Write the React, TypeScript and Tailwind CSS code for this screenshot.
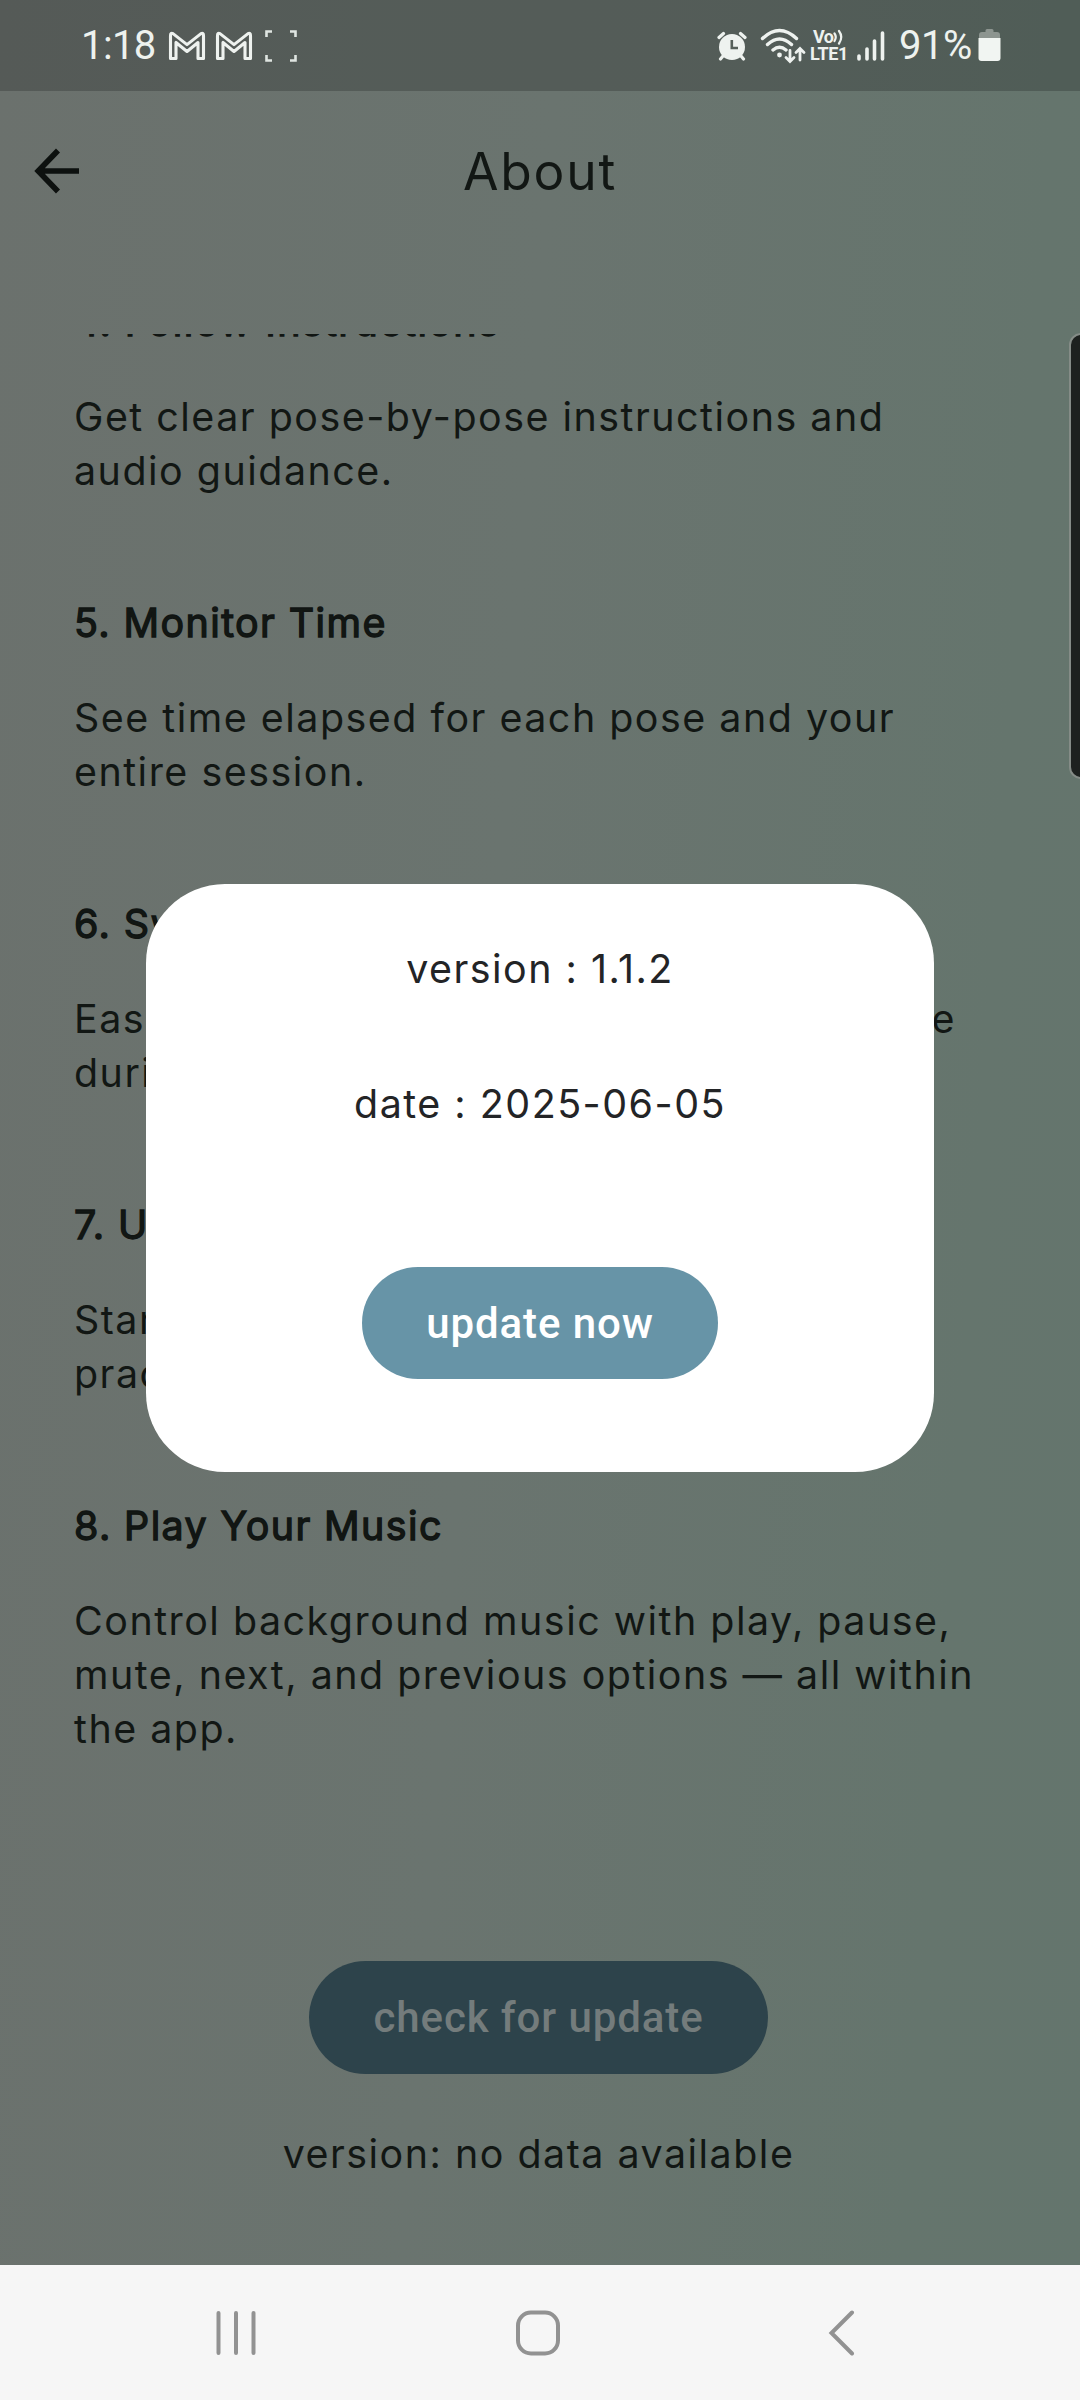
import React from "react";

type Section = { title: string; lines: string[]; spread?: boolean };

const sections: Section[] = [
  { title: "4. Follow Instructions", lines: ["Get clear pose-by-pose instructions and", "audio guidance."] },
  { title: "5. Monitor Time", lines: ["See time elapsed for each pose and your", "entire session."] },
  { title: "6. Switch Poses", lines: ["Easily move to the next or previous pose", "during your session."], spread: true },
  { title: "7. Use Anytime", lines: ["Start a session whenever you want and", "practice anywhere."] },
  {
    title: "8. Play Your Music",
    lines: ["Control background music with play, pause,", "mute, next, and previous options — all within", "the app."],
  },
];

function Gmail() {
  return (
    <svg className="h-[30px] w-[38px]" viewBox="0 0 38 30" fill="none" stroke="#eef2ef" strokeWidth="3.1" strokeLinejoin="round">
      <path d="M2.500 4.500Q2.500 1.400 5 2.600L19 13.600 33 2.600Q35.500 1.400 35.500 4.500V27.500H30V11.500L19 20.500 8 11.500V27.500H2.500Z" />
    </svg>
  );
}

function StatusBar() {
  return (
    <header className="flex h-[91px] items-center bg-black/20 pl-[81px] pr-[79px] text-[#eef2ef]">
      <span className="font-[Roboto] text-[40px] leading-[91px] tracking-[-0.6px]">1:18</span>
      <div className="ml-[12px] flex items-center gap-[9px]">
        <Gmail />
        <Gmail />
        <svg className="ml-[3px] h-[32px] w-[32px]" viewBox="0 0 32 32" fill="none" stroke="#dfe5e1" strokeWidth="2.6">
          <path d="M1.500 7V1.500H7M25 1.500H30.500V7M30.500 25V30.500H25M7 30.500H1.500V25" />
        </svg>
      </div>
      <div className="ml-auto flex items-center">
        <svg className="h-[30px] w-[30px]" viewBox="0 0 30 30">
          <g stroke="#eef2ef" strokeWidth="3.200" strokeLinecap="round">
            <path d="M2 6.500 6.500 2.500M28 6.500 23.500 2.500M6 25 3.500 28M24 25 26.500 28" />
          </g>
          <circle cx="15" cy="16" r="13" fill="#eef2ef" />
          <path d="M14.800 9V17H21" fill="none" stroke="#56605a" strokeWidth="2.600" />
        </svg>
        <svg className="ml-[13px] h-[36px] w-[46px]" viewBox="0 0 46 36" fill="none" stroke="#eef2ef" strokeWidth="3.400" strokeLinecap="round">
          <path d="M2.500 10.500Q19.500-5.500 36.500 10.500M7.500 16.500Q19.500 5.500 31.500 16.500M13 22Q19.500 16.500 26 22" />
          <circle cx="19.500" cy="27" r="2.400" fill="#eef2ef" stroke="none" />
          <path d="M30 22.500V33M26 29.500 30 33.500 34 29.500M40 32V21M36 24.500 40 20.500 44 24.500" strokeWidth="2.800" />
        </svg>
        <div className="ml-[4px] flex w-[39px] flex-col font-[Roboto] font-bold">
          <span className="flex h-[17px] items-center pl-[3px] text-[18px] leading-[17px] tracking-[-0.5px]">
            Vo
            <svg className="h-[16px] w-[11px]" viewBox="0 0 11 16" fill="none" stroke="#eef2ef" strokeWidth="2.200" strokeLinecap="round">
              <path d="M1.500 4.500Q4 8 1.500 12M6 2Q10.500 8 6 14.500" />
            </svg>
          </span>
          <span className="text-[18px] leading-[18px] tracking-[-0.3px]">LTE1</span>
        </div>
        <svg className="ml-[8px] h-[30px] w-[28px]" viewBox="0 0 28 30" stroke="#eef2ef" strokeWidth="3.600" strokeLinecap="round">
          <path d="M2 25V28M10 18V28M17.500 10V28M25.500 2V28" />
        </svg>
        <span className="ml-[14px] font-[Roboto] text-[40px] leading-[91px] tracking-[-0.4px]">91%</span>
        <svg className="ml-[6px] h-[33px] w-[23px]" viewBox="0 0 23 33">
          <path d="M7.500 1.500Q7.500 0 9 0H14Q15.500 0 15.500 1.500V3H19Q22 3 22 6V12H1V6Q1 3 4 3H7.500Z" fill="#8d9590" />
          <path d="M.500 9H22.500V29Q22.500 32 19.500 32H3.500Q.500 32 .500 29Z" fill="#f1f5f2" />
        </svg>
      </div>
    </header>
  );
}

export default function App() {
  return (
    <div className="relative flex h-[2400px] w-[1080px] flex-col overflow-hidden bg-[linear-gradient(94deg,#6b716d_0%,#6a746f_45%,#65756d_85%,#64756d_100%)] font-[Inter,sans-serif] text-[#121714]">
      <StatusBar />

      <div className="relative flex h-[160px] items-center justify-center">
        <svg className="absolute left-[33px] top-[57px] h-[46px] w-[46px]" viewBox="0 0 46 46" fill="none" stroke="#0d110f" strokeWidth="5.600">
          <path d="M46 23H6M25 2.500 5.200 23 25 43.500" />
        </svg>
        <h1 className="text-[51.500px] leading-[60px] tracking-[1.800px]">About</h1>
      </div>

      <main className="mt-[83px] h-[1931px] overflow-hidden pl-[74px]">
        <div className="-mt-[39px]">
          {sections.map((s) => (
            <section key={s.title} className="mb-[97.700px] whitespace-nowrap">
              <h2 className="mb-[41px] text-[39.400px] leading-[54.300px] tracking-[1.400px] [-webkit-text-stroke:1.300px_#101412]">{s.title}</h2>
              {s.lines.map((l, i) => (
                <p
                  key={l}
                  className={
                    s.spread && i === 0
                      ? "w-[882px] text-[39.400px] leading-[54px] tracking-[1.500px] [text-align-last:justify]"
                      : "text-[39.400px] leading-[54px] tracking-[1.500px]"
                  }
                >
                  {l}
                </p>
              ))}
            </section>
          ))}
        </div>
        <div className="mr-[77px] flex flex-col items-center">
          <button className="mt-[107px] h-[113px] w-[459px] rounded-full bg-[#2d434b] font-[Roboto] text-[42px] font-medium tracking-[0.900px] text-[#747c7c]">
            check for update
          </button>
          <p className="mt-[53px] text-[39.400px] leading-[54px] tracking-[1.500px]">version: no data available</p>
        </div>
      </main>

      <nav className="relative h-[135px] shrink-0 bg-[#f6f6f6]">
        <div className="flex pl-[214px] pt-[45px]">
          <svg className="h-[46px] w-[44px]" viewBox="0 0 44 46" stroke="#929292" strokeWidth="4" strokeLinecap="round">
            <path d="M4.500 3V43M22 3V43M39.500 3V43" />
          </svg>
          <svg className="ml-[257px] h-[46px] w-[46px]" viewBox="0 0 46 46" fill="none" stroke="#929292" strokeWidth="4">
            <rect x="3" y="2.500" width="40" height="41" rx="13" />
          </svg>
          <svg className="ml-[266px] h-[46px] w-[30px]" viewBox="0 0 30 46" fill="none" stroke="#929292" strokeWidth="4" strokeLinecap="round">
            <path d="M25 2.500 4.500 23 25 43.500" />
          </svg>
        </div>
      </nav>

      <div className="absolute left-[1069px] top-[333px] h-[446px] w-[24px] rounded-[14px] border-2 border-[#858c87] bg-[#1d211f]" />

      <div className="absolute left-[146px] top-[884px] flex h-[588px] w-[788px] flex-col items-center rounded-[79px] bg-white text-[#232426]">
        <p className="mt-[58px] text-[39.400px] leading-[54px] tracking-[1.500px]">version : 1.1.2</p>
        <p className="mt-[81px] text-[39.400px] leading-[54px] tracking-[1.500px]">date : 2025-06-05</p>
        <button className="mt-[136px] h-[112px] w-[356px] rounded-full bg-[#6794a7] font-[Roboto] text-[42px] font-medium tracking-[0.900px] text-white">
          update now
        </button>
      </div>
    </div>
  );
}
